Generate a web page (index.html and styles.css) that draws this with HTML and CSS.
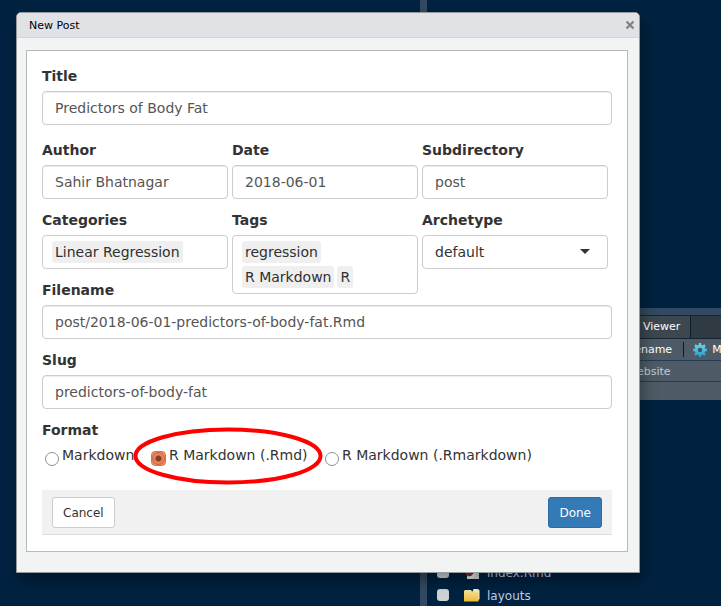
FILE: index.html
```html
<!DOCTYPE html>
<html lang="en">
<head>
<meta charset="utf-8">
<title>New Post</title>
<link rel="stylesheet" href="styles.css">
</head>
<body>
<div class="ide">
  <div class="source-pane"></div>
  <div class="splitter"></div>
  <div class="right-column">
    <div class="top-pane"></div>
    <div class="row-splitter"></div>
    <div class="tabs"><span class="tab">Viewer</span><span class="tab-space"></span></div>
    <div class="toolbar">
      <span>Rename</span><span class="divider"></span>
      <svg class="gear" viewBox="0 0 14 14"><defs><linearGradient id="g" x2="0" y2="1"><stop stop-color="#7bd3e8"/><stop offset="1" stop-color="#22a0c8"/></linearGradient></defs><path d="M6 0h2l.4 1.900 1.200.5L11.300 1.300l1.400 1.400-1.100 1.700.5 1.200L14 6v2l-1.900.4-.5 1.200 1.100 1.700-1.400 1.400-1.700-1.100-1.200.5L8 14H6l-.4-1.900-1.200-.5-1.700 1.100-1.400-1.400 1.100-1.700-.5-1.200L0 8V6l1.900-.4.5-1.200L1.300 2.700l1.400-1.400 1.700 1.100 1.200-.5z" fill="url(#g)"/><circle cx="7" cy="7" r="2.200" fill="#34566a"/></svg>
      <span>More</span>
    </div>
    <div class="crumbs">website</div>
    <div class="columns"></div>
    <div class="files">
      <div class="file"><span class="check"></span>
        <svg class="file-icon" viewBox="0 0 16 16"><path d="M3 0h12v15H3z" fill="#d5d8dc"/><circle cx="6" cy="7.500" r="5" fill="#8b2345"/><path d="M3 15v-2l4-1 4-4 1 2-3 4z" fill="#f0f0f0"/></svg>
        <span>index.Rmd</span></div>
      <div class="file"><span class="check"></span>
        <svg class="file-icon" viewBox="0 0 16 16"><defs><linearGradient id="f" x2="0" y2="1"><stop stop-color="#f6e7a5"/><stop offset="1" stop-color="#edb92f"/></linearGradient></defs><path d="M8.500 5l1-3h4.500l1.500 1.500V12l-2 2z" fill="#f3efc5"/><path d="M0 4l1-1h6l1 1.500h6.500V14.500H0z" fill="url(#f)"/></svg>
        <span>layouts</span></div>
    </div>
  </div>
</div>
<div class="dialog">
  <div class="caption"><span>New Post</span>
    <svg class="close" viewBox="0 0 10 10"><path d="M1.500 1.500l7 7M8.500 1.500l-7 7" stroke="#808184" stroke-width="2.200"/></svg>
  </div>
  <div class="frame">
    <div class="group title-group"><label>Title</label><div class="input">Predictors of Body Fat</div></div>
    <div class="fields">
      <div class="group"><label>Author</label><div class="input">Sahir Bhatnagar</div></div>
      <div class="group"><label>Date</label><div class="input">2018-06-01</div></div>
      <div class="group"><label>Subdirectory</label><div class="input">post</div></div>
    </div>
    <div class="fields">
      <div class="group"><label>Categories</label><div class="picker"><div class="items"><span class="item">Linear Regression</span></div></div></div>
      <div class="group"><label>Tags</label><div class="picker"><div class="items"><span class="item">regression</span></div><div class="items"><span class="item">R Markdown</span><span class="item">R</span></div></div></div>
      <div class="group"><label>Archetype</label><div class="input select"><span>default</span><span class="caret"></span></div></div>
    </div>
    <div class="group"><label>Filename</label><div class="input">post/2018-06-01-predictors-of-body-fat.Rmd</div></div>
    <div class="group"><label>Slug</label><div class="input">predictors-of-body-fat</div></div>
    <div class="format"><label>Format</label>
      <div class="options">
        <span class="option first"><i class="radio"></i>Markdown</span>
        <span class="option second"><i class="radio checked"></i>R Markdown (.Rmd)
          <svg class="highlight" viewBox="0 0 190 58"><ellipse cx="95" cy="29" rx="92.500" ry="26.500" fill="none" stroke="#f00" stroke-width="4"/></svg></span>
        <span class="option"><i class="radio"></i>R Markdown (.Rmarkdown)</span>
      </div>
    </div>
    <div class="footer"><span class="button">Cancel</span><span class="button primary">Done</span></div>
  </div>
</div>
</body>
</html>
```
FILE: styles.css
```css
* { box-sizing: border-box; }
body { margin: 0; width: 721px; height: 606px; overflow: hidden; font: 14px/20px "DejaVu Sans", sans-serif; color: #333; background: #002240; }
.ide { display: flex; height: 606px; font-size: 11px; color: #fff; }
.source-pane { width: 420px; flex: none; }
.splitter { width: 7px; flex: none; background: #324a61; }
.right-column { width: 294px; flex: none; overflow: hidden; }
.top-pane { height: 308px; }
.row-splitter { height: 7px; background: #324a61; }
.tabs { display: flex; height: 24px; background: #303a43; border-top: 1px solid #182531; border-bottom: 1px solid #182531; }
.tab { width: 264px; padding-left: 216px; line-height: 21px; background: #3c4750; border-right: 1px solid #0e1c29; }
.toolbar { display: flex; align-items: center; height: 22px; padding-left: 200px; background: #4e5b66; border-bottom: 1px solid #233c54; white-space: nowrap; }
.divider { width: 1px; height: 15px; flex: none; margin: 0 9px 0 11px; background: #101820; }
.gear { width: 14px; height: 14px; flex: none; margin-right: 5px; }
.crumbs { height: 21px; padding-left: 201px; line-height: 21px; background: #4e5b66; border-bottom: 1px solid #233c54; color: #c2cbd3; }
.columns { height: 18px; background: #4e5b66; }
.files { padding-top: 161px; font-size: 12px; color: #c0cbea; }
.file { display: flex; align-items: center; height: 23px; padding-left: 10px; }
.check { width: 12px; height: 12px; margin: -2px 15px 0 0; border-radius: 3px; background: #ced3d8; }
.file-icon { width: 16px; height: 16px; margin: -2px 7px 0 0; }

.dialog { position: absolute; left: 16px; top: 12px; width: 624px; height: 561px; border: 1px solid #96999b; border-radius: 5px 5px 0 0; background: #f2f4f4; box-shadow: 3px 8px 15px rgba(0,0,0,.35); }
.caption { display: flex; justify-content: space-between; align-items: center; height: 25px; padding: 1px 4px 0 12px; border-radius: 4px 4px 0 0; background: #e1e2e6; border-bottom: 1px solid #d2d4d6; font-size: 11px; color: #000; }
.close { width: 10px; height: 10px; margin-top: -2px; }
.frame { width: 602px; height: 502px; margin: 12px 0 0 9px; padding: 15px; border: 1px solid #b5bab7; background: #fff; }
.group { height: 70px; }
.title-group { height: 74px; }
label { display: block; margin-bottom: 5px; font-weight: bold; }
.input, .picker { border: 1px solid #ccc; border-radius: 4px; }
.input { height: 34px; padding: 6px 12px; color: #555; box-shadow: inset 0 1px 1px rgba(0,0,0,.075); }
.fields { display: grid; grid-template-columns: repeat(3, 186px); column-gap: 4px; height: 70px; }
.picker { display: grid; gap: 3px; min-height: 34px; padding: 5px 9px; }
.items { display: flex; gap: 3px; }
.item { height: 22px; padding: 1px 3px; border-radius: 3px; background: #efefef; color: #303030; }
.select { display: flex; justify-content: space-between; align-items: center; padding-right: 17px; color: #333; box-shadow: none; }
.caret { border: 5px solid transparent; border-top-color: #333; border-bottom: 0; margin-top: -1px; }
.format { height: 74px; }
.format label { margin: 0; }
.options { display: flex; height: 30px; padding: 5px 0 0 3px; white-space: nowrap; }
.option { display: flex; position: relative; }
.first { width: 106px; }
.second { width: 174px; }
.radio { width: 14px; height: 14px; flex: none; margin: 7px 3px 0 0; border: 1px solid #8f8f8f; border-radius: 50%; background: #fff; }
.checked { width: 15px; height: 15px; margin: 6px 3px 0 0; border: 1px solid #c77b59; border-radius: 4px; background: radial-gradient(circle, #813f29 0 2.500px, #ee8054 3.500px 5px, #c9694a 6px, #f29367 7px); }
.highlight { position: absolute; left: -18px; top: -18px; width: 190px; height: 58px; }
.footer { display: flex; justify-content: space-between; height: 45px; margin-top: -4px; padding: 7px 10px; border-bottom: 1px solid #ddd; background: #f1f1f1; }
.button { height: 31px; padding: 5px 10px; border: 1px solid #ccc; border-radius: 3px; background: #fff; font-size: 12px; line-height: 20px; }
.primary { background: #337ab7; border-color: #2e6da4; color: #fff; }
```
